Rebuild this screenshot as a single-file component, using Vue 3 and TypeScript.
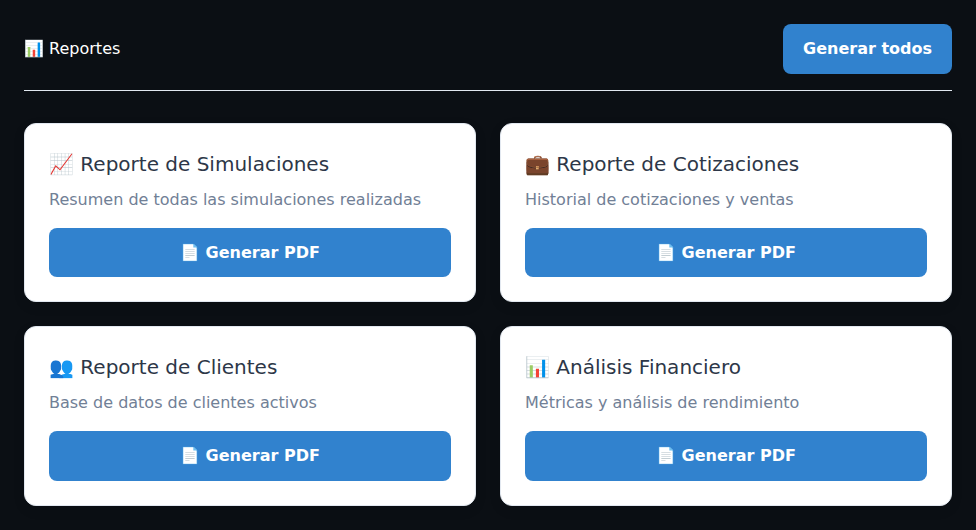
<script setup lang="ts">
interface Report {
  icon: string
  title: string
  description: string
}

const reports: Report[] = [
  { icon: '📈', title: 'Reporte de Simulaciones', description: 'Resumen de todas las simulaciones realizadas' },
  { icon: '💼', title: 'Reporte de Cotizaciones', description: 'Historial de cotizaciones y ventas' },
  { icon: '👥', title: 'Reporte de Clientes', description: 'Base de datos de clientes activos' },
  { icon: '📊', title: 'Análisis Financiero', description: 'Métricas y análisis de rendimiento' },
]
</script>

<template>
  <main class="page">
    <header class="header">
      <h1 class="heading">📊 Reportes</h1>
      <button class="btn" type="button">Generar todos</button>
    </header>
    <section class="grid">
      <article v-for="r in reports" :key="r.title" class="card">
        <h2 class="title">{{ r.icon }} {{ r.title }}</h2>
        <p class="description">{{ r.description }}</p>
        <button class="btn wide" type="button">📄 Generar PDF</button>
      </article>
    </section>
  </main>
</template>

<style>
body {
  margin: 0;
  background: #0b0f14;
}
</style>

<style scoped>
.page {
  box-sizing: border-box;
  min-height: 530px;
  padding: 24px;
  font-family: 'DejaVu Sans', sans-serif;
  font-size: 16px;
}
.header {
  display: flex;
  align-items: center;
  justify-content: space-between;
  padding-bottom: 16px;
  margin-bottom: 32px;
  border-bottom: 1px solid #e2e8f0;
}
.heading {
  margin: 0;
  font-size: 16px;
  font-weight: 400;
  line-height: 24px;
  color: #fff;
}
.btn {
  display: block;
  padding: 12px 20px;
  border: 0;
  border-radius: 8px;
  background: #3182ce;
  color: #fff;
  font-family: inherit;
  font-size: 16px;
  font-weight: 600;
  line-height: 1.6;
}
.grid {
  display: grid;
  grid-template-columns: 1fr 1fr;
  gap: 24px;
}
.card {
  padding: 24px;
  border: 1px solid #e2e8f0;
  border-radius: 12px;
  background: #fff;
  box-shadow: 0 4px 12px rgba(0, 0, 0, 0.1);
}
.title {
  margin: 0 0 8px;
  font-size: 20px;
  font-weight: 400;
  line-height: 32px;
  color: #2d3748;
}
.description {
  margin: 0 0 16px;
  line-height: 24px;
  color: #718096;
}
.wide {
  width: 100%;
}
</style>
